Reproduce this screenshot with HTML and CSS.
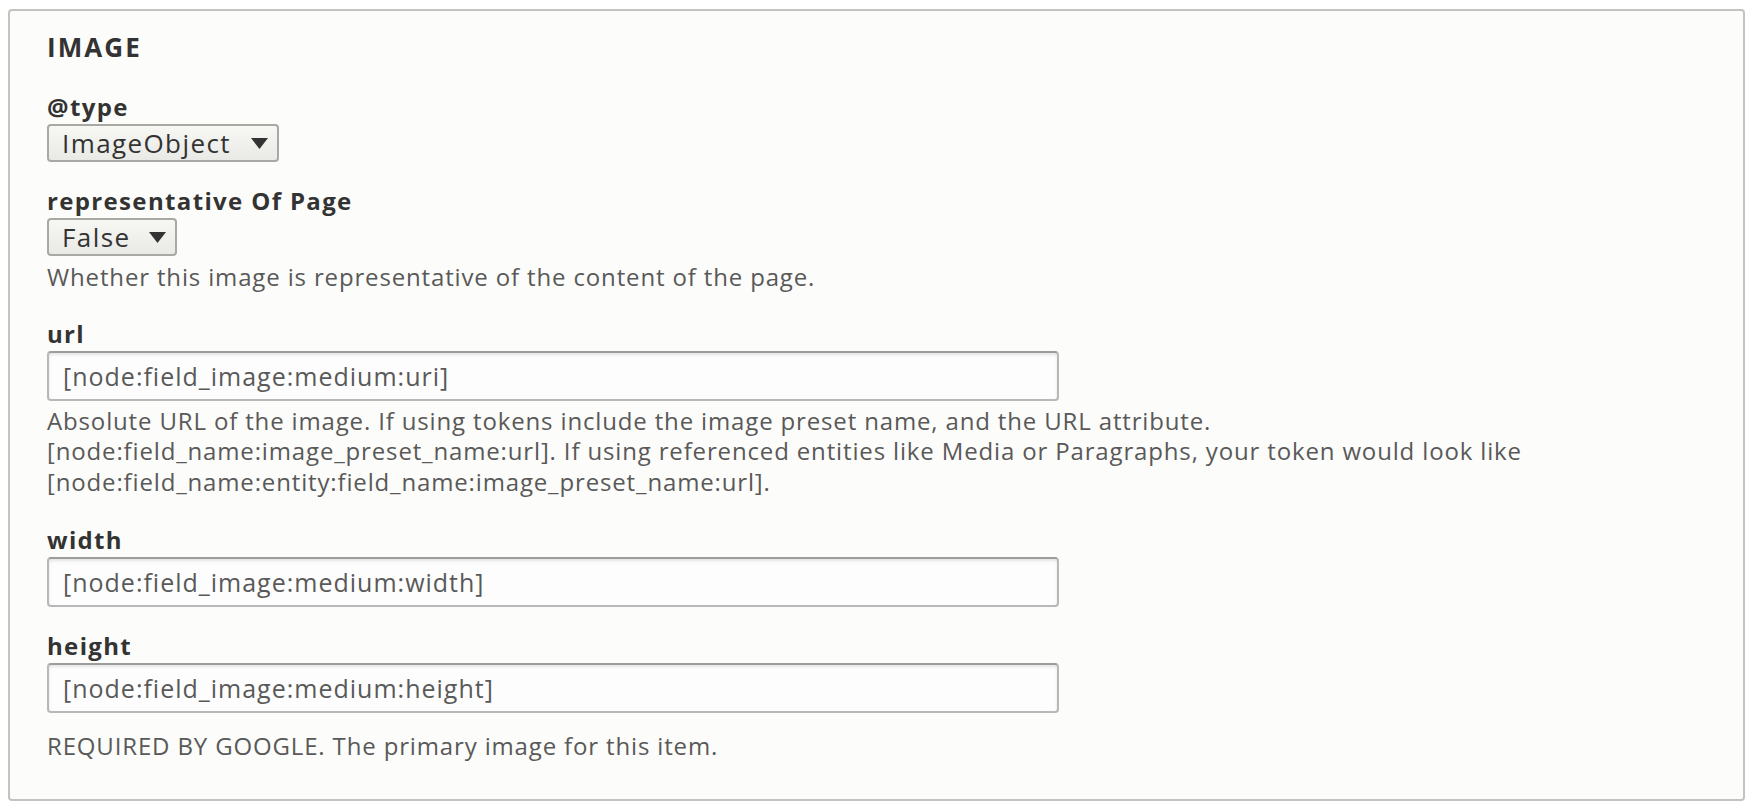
FILE: index.html
```html
<!DOCTYPE html>
<html lang="en">
<head>
<meta charset="utf-8">
<title>Image</title>
<link rel="stylesheet" href="styles.css">
</head>
<body>
<div class="fieldset">
  <div class="legend">Image</div>

  <div class="form-item first">
    <label class="label">@type</label>
    <div class="select select-type">
      <span class="select-text">ImageObject</span>
      <svg class="arrow" width="17" height="11" viewBox="0 0 17 11"><path d="M0 0 H17 L8.5 11 Z" fill="#333"/></svg>
    </div>
  </div>

  <div class="form-item">
    <label class="label">representative Of Page</label>
    <div class="select select-bool">
      <span class="select-text">False</span>
      <svg class="arrow" width="17" height="11" viewBox="0 0 17 11"><path d="M0 0 H17 L8.5 11 Z" fill="#333"/></svg>
    </div>
    <div class="description desc-select">Whether this image is representative of the content of the page.</div>
  </div>

  <div class="form-item url-item">
    <label class="label">url</label>
    <input class="text-input" type="text" value="[node:field_image:medium:uri]">
    <div class="description">Absolute URL of the image. If using tokens include the image preset name, and the URL attribute.<br>[node:field_name:image_preset_name:url]. If using referenced entities like Media or Paragraphs, your token would look like [node:field_name:entity:field_name:image_preset_name:url].</div>
  </div>

  <div class="form-item width-item">
    <label class="label">width</label>
    <input class="text-input" type="text" value="[node:field_image:medium:width]">
  </div>

  <div class="form-item">
    <label class="label">height</label>
    <input class="text-input" type="text" value="[node:field_image:medium:height]">
  </div>

  <div class="description fieldset-desc">REQUIRED BY GOOGLE. The primary image for this item.</div>
</div>
</body>
</html>
```

FILE: styles.css
```css
html, body {
  margin: 0;
  padding: 0;
  background: #ffffff;
}

body {
  font-family: "Open Sans", "DejaVu Sans", sans-serif;
  font-size: 24px;
  color: #333333;
}

.fieldset {
  box-sizing: border-box;
  margin: 9px 0 0 8px;
  width: 1737px;
  height: 792px;
  padding: 21px 37px 0 37px;
  border: 2px solid #c3c3c0;
  border-radius: 4px;
  background: #fcfcfa;
  display: flex;
  flex-direction: column;
}

.legend {
  font-size: 26px;
  font-weight: 700;
  line-height: 30px;
  letter-spacing: 0.08em;
  text-transform: uppercase;
  color: #333333;
}

.form-item {
  display: flex;
  flex-direction: column;
  align-items: flex-start;
  margin-top: 24px;
}

.form-item.first {
  margin-top: 30px;
}

.form-item.url-item {
  margin-top: 26px;
}

.form-item.width-item {
  margin-top: 28px;
}

.label {
  display: block;
  font-weight: 700;
  line-height: 30px;
  letter-spacing: 1.35px;
  margin-bottom: 2px;
  color: #333333;
}

.select {
  box-sizing: border-box;
  height: 38px;
  display: flex;
  align-items: center;
  justify-content: space-between;
  padding: 0 9px 0 13px;
  border: 2px solid #a8a8a5;
  border-radius: 4px;
  background: linear-gradient(#f7f7f4, #e9e9e5);
  color: #333333;
}

.select-type {
  width: 232px;
}

.select-bool {
  width: 130px;
}

.select-text {
  font-size: 26px;
  letter-spacing: 1.4px;
  line-height: 30px;
}

.arrow {
  display: block;
  flex: none;
}

.text-input {
  box-sizing: border-box;
  width: 1012px;
  height: 50px;
  margin: 0;
  padding: 0 14px;
  font-family: inherit;
  font-size: 25px;
  letter-spacing: 1px;
  color: #595959;
  background: #fdfdfd;
  border: 2px solid #b8b8b8;
  border-top-color: #9d9d9d;
  border-radius: 4px;
  box-shadow: inset 0 2px 3px rgba(0, 0, 0, 0.1);
  outline: none;
}

.description {
  line-height: 30.5px;
  letter-spacing: 0.85px;
  color: #595959;
  margin-top: 5px;
}

.desc-select {
  margin-top: 6px;
}

.fieldset-desc {
  margin-top: 18px;
}
```
